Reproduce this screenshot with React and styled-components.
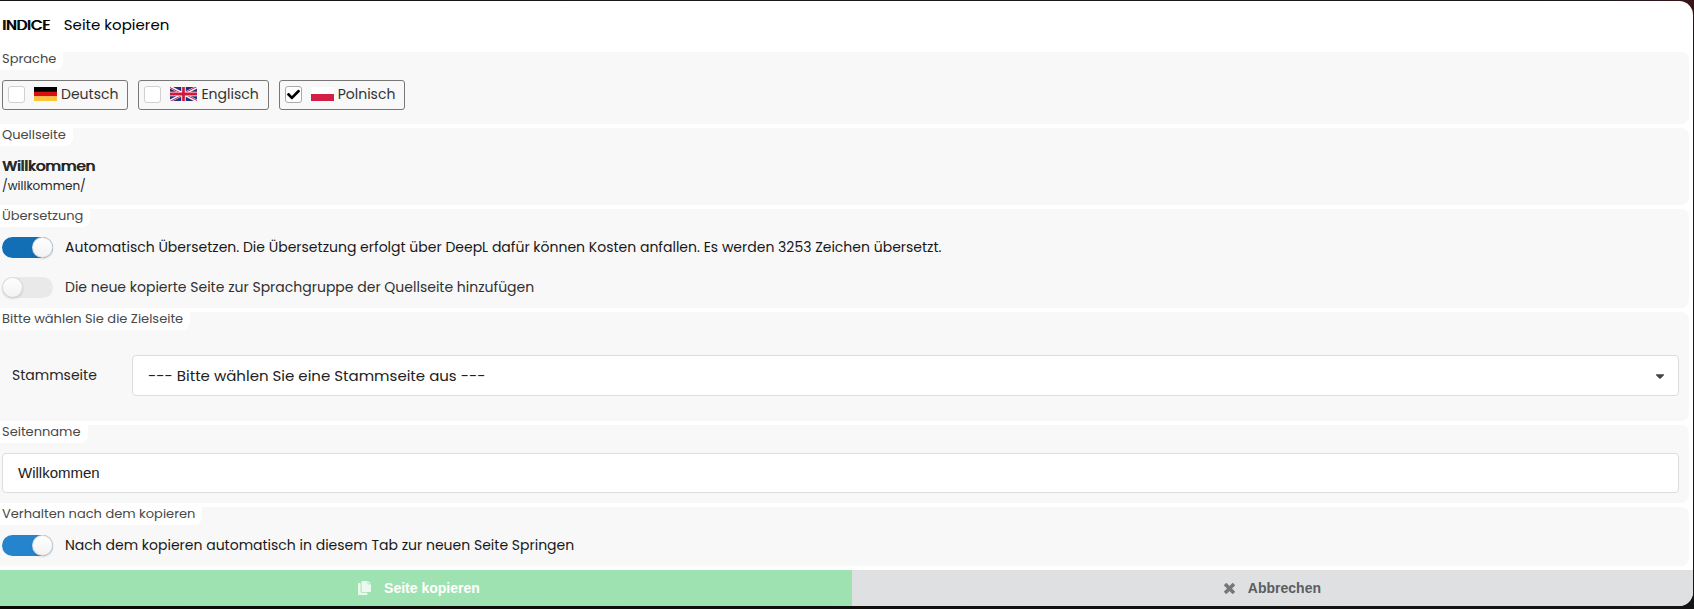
import React, { useState } from 'react';
import styled, { createGlobalStyle } from 'styled-components';
import { FaCheck, FaCaretDown } from 'react-icons/fa';

const GlobalStyle = createGlobalStyle`
  * {
    box-sizing: border-box;
  }
  body {
    margin: 0;
    min-height: 100vh;
    overflow-x: hidden;
    background: linear-gradient(to bottom left, #3c1416 0, #1c1a1f 30px, #141312 60%, #0a0906 100%);
    font-family: Poppins, Inter, sans-serif;
    font-size: 14px;
    line-height: 20px;
    color: #262626;
  }
`;

const GermanFlag = () => (
  <svg width="23" height="14" viewBox="0 0 23 14" aria-hidden="true">
    <rect width="23" height="5" fill="#000" />
    <rect y="4.7" width="23" height="4.7" fill="#d80f0f" />
    <rect y="9.4" width="23" height="4.6" fill="#fdc534" />
  </svg>
);

const BritishFlag = () => (
  <svg width="27" height="14" viewBox="0 0 60 30" preserveAspectRatio="none" aria-hidden="true">
    <clipPath id="uk">
      <path d="M30 15h30v15zv15H0zH0V0zV0h30z" />
    </clipPath>
    <rect width="60" height="30" fill="#23307a" />
    <path d="M0 0l60 30m0-30L0 30" stroke="#fff" strokeWidth="6" />
    <path d="M0 0l60 30m0-30L0 30" clipPath="url(#uk)" stroke="#d0173c" strokeWidth="4" />
    <path d="M30 0v30M0 15h60" stroke="#fff" strokeWidth="10" />
    <path d="M30 0v30M0 15h60" stroke="#d0173c" strokeWidth="6" />
  </svg>
);

const PolishFlag = () => (
  <svg width="23" height="14" viewBox="0 0 23 14" aria-hidden="true">
    <rect width="23" height="14" fill="#fff" />
    <rect y="7" width="23" height="7" fill="#d21f45" />
  </svg>
);

const CopyIcon = () => (
  <svg width="13" height="14" viewBox="0 0 13 14" aria-hidden="true">
    <path d="M0 2.8Q0 2 .8 2H2.6V10.4Q2.6 11.8 3.8 11.8H9.4V13.2Q9.4 14 8.6 14H.8Q0 14 0 13.2Z" />
    <path d="M3.5.8Q3.5 0 4.3 0H9.6V3.3H13V10.1Q13 10.9 12.2 10.9H4.3Q3.5 10.9 3.5 10.1Z" />
    <path d="M10.3 0L13 2.6H10.3Z" />
  </svg>
);

const CrossIcon = () => (
  <svg width="11" height="11" viewBox="0 0 11 11" aria-hidden="true">
    <path d="M2.3 2.3L8.7 8.7M8.7 2.3L2.3 8.7" stroke="currentColor" strokeWidth="3.6" strokeLinecap="square" />
  </svg>
);

const LANGUAGES = [
  { id: 'de', name: 'Deutsch', Flag: GermanFlag },
  { id: 'en', name: 'Englisch', Flag: BritishFlag },
  { id: 'pl', name: 'Polnisch', Flag: PolishFlag },
];

const Toggle = ({ id, label, strong, shade, defaultChecked }) => (
  <ToggleRow>
    <Switch type="checkbox" id={id} $shade={shade} defaultChecked={defaultChecked} />
    <ToggleLabel htmlFor={id} $strong={strong}>{label}</ToggleLabel>
  </ToggleRow>
);

const App = () => {
  const [selected, setSelected] = useState(['pl']);
  const [name, setName] = useState('Willkommen');

  const toggleLanguage = id => {
    setSelected(selected.includes(id) ? selected.filter(l => l !== id) : [...selected, id]);
  };

  return (
    <Modal>
      <GlobalStyle />
      <Header>
        <Brand>INDICE</Brand>
        <span>Seite kopieren</span>
      </Header>
      <Sections>
        <Section $bottom={14}>
          <Caption>Sprache</Caption>
          <Languages>
            {LANGUAGES.map(({ id, name, Flag }) => (
              <Language key={id}>
                <CheckBox>
                  <input type="checkbox" checked={selected.includes(id)} onChange={() => toggleLanguage(id)} />
                  {selected.includes(id) && <FaCheck size={13} />}
                </CheckBox>
                <Flag />
                {name}
              </Language>
            ))}
          </Languages>
        </Section>

        <Section $bottom={9}>
          <Caption>Quellseite</Caption>
          <Source>
            <SourceName>Willkommen</SourceName>
            <SourcePath>/willkommen/</SourcePath>
          </Source>
        </Section>

        <Section $bottom={10}>
          <Caption>Übersetzung</Caption>
          <Toggles>
            <Toggle
              id="translate"
              strong
              shade="#126fb6"
              defaultChecked
              label="Automatisch Übersetzen. Die Übersetzung erfolgt über DeepL dafür können Kosten anfallen. Es werden 3253 Zeichen übersetzt."
            />
            <Toggle id="group" label="Die neue kopierte Seite zur Sprachgruppe der Quellseite hinzufügen" />
          </Toggles>
        </Section>

        <Section $bottom={25}>
          <Caption>Bitte wählen Sie die Zielseite</Caption>
          <ParentRow>
            <label htmlFor="parent">Stammseite</label>
            <SelectBox>
              <Select id="parent">
                <option>--- Bitte wählen Sie eine Stammseite aus ---</option>
              </Select>
              <FaCaretDown size={14} />
            </SelectBox>
          </ParentRow>
        </Section>

        <Section $bottom={10}>
          <Caption as="label" htmlFor="name">Seitenname</Caption>
          <NameField id="name" type="text" value={name} onChange={e => setName(e.target.value)} />
        </Section>

        <Section $bottom={10}>
          <Caption>Verhalten nach dem kopieren</Caption>
          <Toggles>
            <Toggle
              id="jump"
              strong
              shade="#2584ce"
              defaultChecked
              label="Nach dem kopieren automatisch in diesem Tab zur neuen Seite Springen"
            />
          </Toggles>
        </Section>
      </Sections>
      <Actions>
        <Action type="button" $primary>
          <CopyIcon />
          Seite kopieren
        </Action>
        <Action type="button">
          <CrossIcon />
          Abbrechen
        </Action>
      </Actions>
    </Modal>
  );
};

export default App;

// the dialog is wider than the window and hangs out on the left
const Modal = styled.main`
  margin: 1px 1px 3px -14px;
  overflow: hidden;
  background: #fff;
  border-radius: 14px;
`;

const Header = styled.header`
  display: flex;
  align-items: center;
  gap: 14px;
  height: 51px;
  padding: 0 16px 4px;
  font-size: 15px;
  color: #000;
`;

// regular weight thickened by a shadow, so it keeps the regular widths
const Bold = styled.strong`
  font-size: 15px;
  font-weight: 400;
  text-shadow: 1px 0 0 currentColor;
`;

const Brand = styled(Bold)`
  color: #000;
`;

const Sections = styled.div`
  display: flex;
  flex-direction: column;
  gap: 4px;
  padding: 0 4px 4px;
`;

const Section = styled.section`
  display: flex;
  flex-direction: column;
  align-items: flex-start;
  padding: 0 10px ${props => props.$bottom}px 12px;
  background: #f8f8f8;
  border-radius: 8px;
`;

const Caption = styled.div`
  height: 18px;
  margin-left: -12px;
  padding: 0 7px 0 12px;
  background: #fff;
  border-bottom-right-radius: 8px;
  font-size: 13px;
  line-height: 14px;
  color: #484848;
`;

const Languages = styled.div`
  display: flex;
  gap: 10px;
  margin-top: 10px;
`;

const Language = styled.label`
  display: flex;
  align-items: center;
  gap: 4px;
  height: 30px;
  padding: 0 9px 2px 5px;
  border: 1px solid #777;
  border-radius: 3px;
  color: #333;
  cursor: pointer;
`;

const CheckBox = styled.span`
  display: grid;
  place-items: center;
  margin-right: 5px;
  color: #000;

  > * {
    grid-area: 1 / 1;
  }
  svg {
    pointer-events: none;
  }
  input {
    appearance: none;
    width: 17px;
    height: 17px;
    margin: 0;
    background: #fff;
    border: 1px solid #d0d0d0;
    border-radius: 3px;
  }
  input:checked {
    border-color: #aaa;
  }
`;

const Source = styled.div`
  display: flex;
  flex-direction: column;
  margin-top: 10px;
`;

const SourceName = styled(Bold)`
  color: #212121;
`;

const SourcePath = styled.span`
  font-size: 12px;
`;

const Toggles = styled.div`
  display: flex;
  flex-direction: column;
  gap: 19px;
  margin-top: 10px;
`;

const ToggleRow = styled.div`
  display: flex;
  align-items: center;
  gap: 12px;
  height: 21px;
`;

const Switch = styled.input`
  appearance: none;
  display: flex;
  width: 51px;
  height: 21px;
  margin: 0;
  background: #e9e9e9;
  border-radius: 11px;
  cursor: pointer;

  &::before {
    content: '';
    width: 21px;
    height: 21px;
    background: linear-gradient(#fff, #f2f2f2);
    border-radius: 50%;
    box-shadow: 0 1px 2px rgba(34, 36, 38, 0.15), 0 0 0 1px rgba(34, 36, 38, 0.15) inset;
  }
  &:checked {
    justify-content: flex-end;
    background: ${props => props.$shade};
  }
`;

const ToggleLabel = styled.label`
  padding-bottom: 2px;
  color: ${props => props.$strong ? '#181818' : '#303030'};
`;

const ParentRow = styled.div`
  display: flex;
  align-items: center;
  align-self: stretch;
  margin-top: 25px;
  padding-left: 10px;

  label {
    flex: 0 0 120px;
    padding-bottom: 2px;
  }
`;

const SelectBox = styled.div`
  display: grid;
  flex: 1;
  align-items: center;

  > * {
    grid-area: 1 / 1;
  }
  svg {
    justify-self: end;
    margin-right: 12px;
    color: #444;
    pointer-events: none;
  }
`;

const Select = styled.select`
  appearance: none;
  width: 100%;
  height: 41px;
  padding: 0 15px;
  background: #fff;
  border: 1px solid #dcdddd;
  border-radius: 4px;
  font-family: inherit;
  font-size: 15px;
  color: #212121;
`;

const NameField = styled.input`
  align-self: stretch;
  height: 40px;
  margin-top: 10px;
  padding: 0 15px 2px;
  background: #fff;
  border: 1px solid #dcdddd;
  border-radius: 4px;
  font-family: "Liberation Sans", Arial, sans-serif;
  font-size: 15px;
  color: #212121;
`;

const Actions = styled.footer`
  display: flex;
`;

const Action = styled.button`
  display: flex;
  flex: 1 1 auto;
  align-items: center;
  justify-content: center;
  gap: 13px;
  height: 36px;
  padding: 0;
  background: ${props => props.$primary ? '#9fe2b1' : '#dfe0e2'};
  border: 0;
  font-family: "Liberation Sans", Arial, sans-serif;
  font-size: 14px;
  font-weight: 700;
  color: ${props => props.$primary ? '#fff' : '#5c5d5e'};
  cursor: pointer;

  svg {
    fill: currentColor;
    opacity: 0.8;
  }
`;
